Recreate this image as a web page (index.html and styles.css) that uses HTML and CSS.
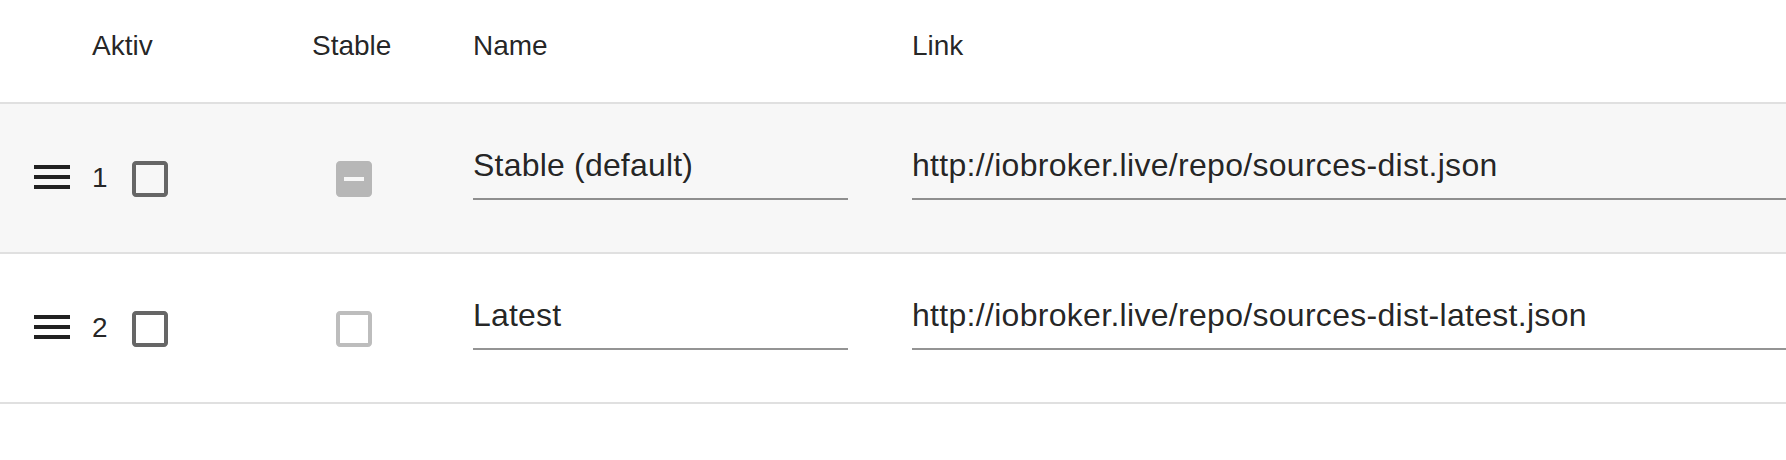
FILE: index.html
```html
<!DOCTYPE html>
<html>
<head>
<meta charset="utf-8">
<link rel="stylesheet" href="styles.css">
</head>
<body>
<div class="table">
  <div class="row head">
    <div class="cell"></div>
    <div class="cell">Aktiv</div>
    <div class="cell">Stable</div>
    <div class="cell">Name</div>
    <div class="cell">Link</div>
  </div>
  <div class="row body odd">
    <div class="cell handle">
      <svg class="icon menu" viewBox="0 0 24 24"><path d="M3 18h18v-2H3v2zm0-5h18v-2H3v2zm0-7v2h18V6H3z"/></svg>
    </div>
    <div class="cell active">
      <span class="num">1</span>
      <span class="cb"><svg class="icon box" viewBox="0 0 24 24"><path d="M19 5v14H5V5h14m0-2H5c-1.11 0-2 .9-2 2v14c0 1.1.89 2 2 2h14c1.1 0 2-.9 2-2V5c0-1.1-.9-2-2-2z"/></svg></span>
    </div>
    <div class="cell">
      <span class="cb"><svg class="icon box disabled" viewBox="0 0 24 24"><path d="M19 3H5c-1.1 0-2 .9-2 2v14c0 1.1.9 2 2 2h14c1.1 0 2-.9 2-2V5c0-1.1-.9-2-2-2zm-2 10H7v-2h10v2z"/></svg></span>
    </div>
    <div class="cell">
      <div class="field name">Stable (default)</div>
    </div>
    <div class="cell">
      <div class="field link">http://iobroker.live/repo/sources-dist.json</div>
    </div>
  </div>
  <div class="row body">
    <div class="cell handle">
      <svg class="icon menu" viewBox="0 0 24 24"><path d="M3 18h18v-2H3v2zm0-5h18v-2H3v2zm0-7v2h18V6H3z"/></svg>
    </div>
    <div class="cell active">
      <span class="num">2</span>
      <span class="cb"><svg class="icon box" viewBox="0 0 24 24"><path d="M19 5v14H5V5h14m0-2H5c-1.11 0-2 .9-2 2v14c0 1.1.89 2 2 2h14c1.1 0 2-.9 2-2V5c0-1.1-.9-2-2-2z"/></svg></span>
    </div>
    <div class="cell">
      <span class="cb"><svg class="icon box disabled" viewBox="0 0 24 24"><path d="M19 5v14H5V5h14m0-2H5c-1.11 0-2 .9-2 2v14c0 1.1.89 2 2 2h14c1.1 0 2-.9 2-2V5c0-1.1-.9-2-2-2z"/></svg></span>
    </div>
    <div class="cell">
      <div class="field name">Latest</div>
    </div>
    <div class="cell">
      <div class="field link">http://iobroker.live/repo/sources-dist-latest.json</div>
    </div>
  </div>
</div>
</body>
</html>
```
FILE: styles.css
```css
html, body {
  margin: 0;
  padding: 0;
  background: #ffffff;
  overflow: hidden;
}
body {
  font-family: "Liberation Sans", Arial, sans-serif;
  color: rgba(0, 0, 0, 0.87);
  width: 1786px;
}
.table {
  width: 1786px;
}
.row {
  display: grid;
  grid-template-columns: 92px 220px 161px 439px 1fr;
  border-bottom: 2px solid #e0e0e0;
}
.head {
  height: 102px;
  font-size: 28px;
  line-height: 32px;
}
.head .cell {
  padding-top: 30px;
}
.body {
  height: 148px;
  align-items: center;
}
.odd {
  background: #f7f7f7;
}
.cell {
  display: flex;
  align-items: center;
  min-width: 0;
}
.head .cell {
  align-items: flex-start;
}
.handle {
  padding-left: 28px;
}
.icon {
  display: block;
  width: 48px;
  height: 48px;
}
.menu {
  fill: #212121;
  margin-bottom: 2px;
}
.num {
  font-size: 28px;
  line-height: 32px;
}
.cb {
  display: block;
  padding: 18px;
  margin-top: 2px;
}
.box {
  fill: #666666;
}
.box.disabled {
  fill: rgba(0, 0, 0, 0.26);
}
.field {
  font-size: 32px;
  line-height: 38px;
  letter-spacing: 0.2px;
  padding-bottom: 14px;
  margin-bottom: 10px;
  border-bottom: 2px solid rgba(0, 0, 0, 0.42);
  white-space: nowrap;
  color: rgba(0, 0, 0, 0.87);
}
.name {
  width: 375px;
}
.link {
  flex: 1;
  letter-spacing: 0.3px;
}
```
